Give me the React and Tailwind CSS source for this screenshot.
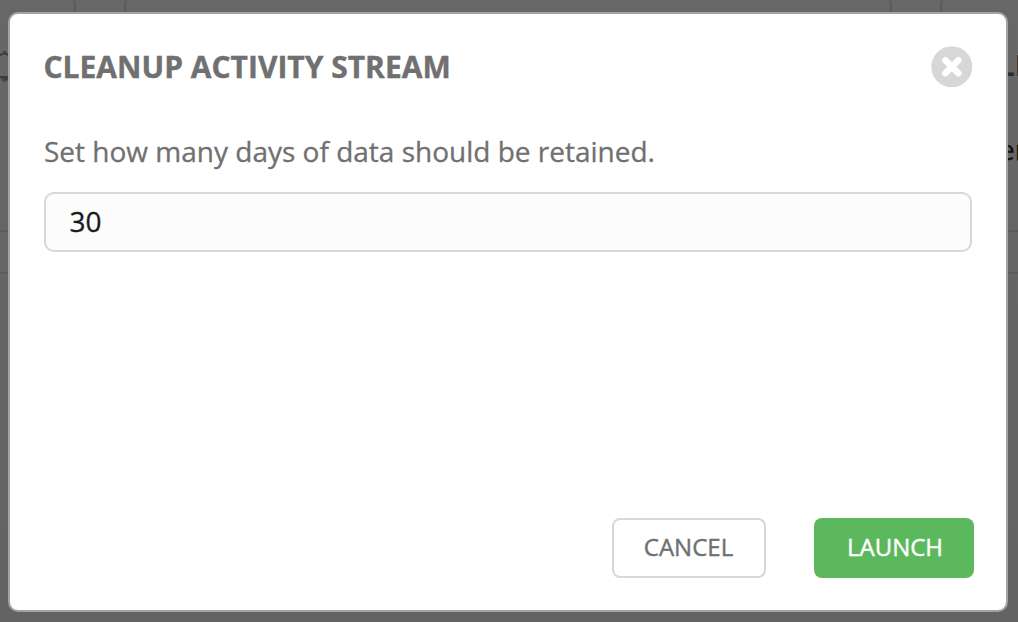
function Backdrop() {
  return (
    <div className="flex h-full flex-col bg-linear-to-b from-[#676767] to-[#636363]">
      <div className="-mt-[3px] flex h-[15px] justify-between">
        <div className="w-[76px] rounded-tr-[8px] border-r-2 border-[#5c5c5c]" />
        <div className="w-[768px] rounded-t-[8px] border-x-2 border-[#5c5c5c]" />
        <div className="w-[78px] rounded-tl-[8px] border-l-2 border-[#5c5c5c]" />
      </div>
      <div className="flex h-[218px] justify-between">
        <svg className="mt-[38px] h-[34px] w-[9px]" viewBox="0 0 9 34" fill="none">
          <path d="M0 5.5C1.5 3.6 2.5 3.5 4.5 3.5S7.5 3.8 9 5.5" stroke="#3b3d40" strokeWidth="2" />
          <path d="M3.3 1h2.4v3H3.3zM0 26h9v2H0zM1 28h7c0 5-7 5-7 0z" fill="#3b3d40" />
          <path d="M2.5 28.5c.3 1.3 1 1.8 2 2" stroke="#606060" strokeWidth="1" />
        </svg>
        <div className="w-[14px] overflow-hidden pt-[34px] whitespace-nowrap text-[#2c2c2c]">
          <div className="h-[34px] -translate-x-[5px] text-[28px] leading-[38px] font-bold">LE</div>
          <div className="mt-[51px] -translate-x-[5px] text-[28px] leading-[36px] text-[#111111] [-webkit-text-stroke:0.3px_#111111]">er</div>
        </div>
      </div>
      <div className="h-[44px] border-y-2 border-[#5c5c5c]" />
    </div>
  );
}

function CloseButton() {
  return (
    <button aria-label="Close" className="-mr-[1px] h-[42px] w-[42px]">
      <svg viewBox="0 0 42 42" className="h-full w-full">
        <circle cx="20.8" cy="20.8" r="20.5" fill="#d7d7d7" />
        <path d="M14.3 14.3 27.3 27.3M27.3 14.3 14.3 27.3" stroke="#fff" strokeWidth="6.5" strokeLinecap="round" />
      </svg>
    </button>
  );
}

export default function App() {
  return (
    <div className="relative h-[622px] w-[1018px] overflow-hidden font-['Open_Sans',sans-serif]">
      <Backdrop />
      <div
        role="dialog"
        className="absolute top-[12px] left-[8px] flex h-[600px] w-[1000px] flex-col rounded-[10px] border-2 border-[#a3a3a3] bg-white px-[34px] pt-[32px] pb-[32px]"
      >
        <div className="flex h-[42px] items-center justify-between">
          <h1 className="-ml-[0.5px] text-[30px] leading-[42px] font-bold whitespace-nowrap text-[#707070] [-webkit-text-stroke:0.4px_#707070]">
            CLEANUP ACTIVITY STREAM
          </h1>
          <CloseButton />
        </div>
        <label
          htmlFor="days"
          className="mt-[43px] block text-[28px] leading-[40px] whitespace-nowrap text-[#707070] [-webkit-text-stroke:0.3px_#707070]"
        >
          Set how many days of data should be retained.
        </label>
        <input
          id="days"
          defaultValue="30"
          className="mt-[21px] h-[60px] w-[928px] rounded-[10px] border-2 border-[#d7d7d7] bg-[#fcfcfc] px-[23.5px] pb-[2px] text-[28px] text-[#161b1f] outline-none [-webkit-text-stroke:0.3px_#161b1f]"
        />
        <div className="-mr-[2px] mt-auto flex justify-end gap-[48px]">
          <button className="h-[60px] w-[154px] rounded-[8px] border-2 border-[#d7d7d7] bg-white pr-[1px] pb-[2px] text-[24px] text-[#707070] [-webkit-text-stroke:0.4px_#707070]">
            CANCEL
          </button>
          <button className="h-[60px] w-[160px] rounded-[8px] bg-[#5cb85c] pb-[2px] pl-[2px] text-[24px] text-white [-webkit-text-stroke:0.4px_#ffffff]">
            LAUNCH
          </button>
        </div>
      </div>
    </div>
  );
}
